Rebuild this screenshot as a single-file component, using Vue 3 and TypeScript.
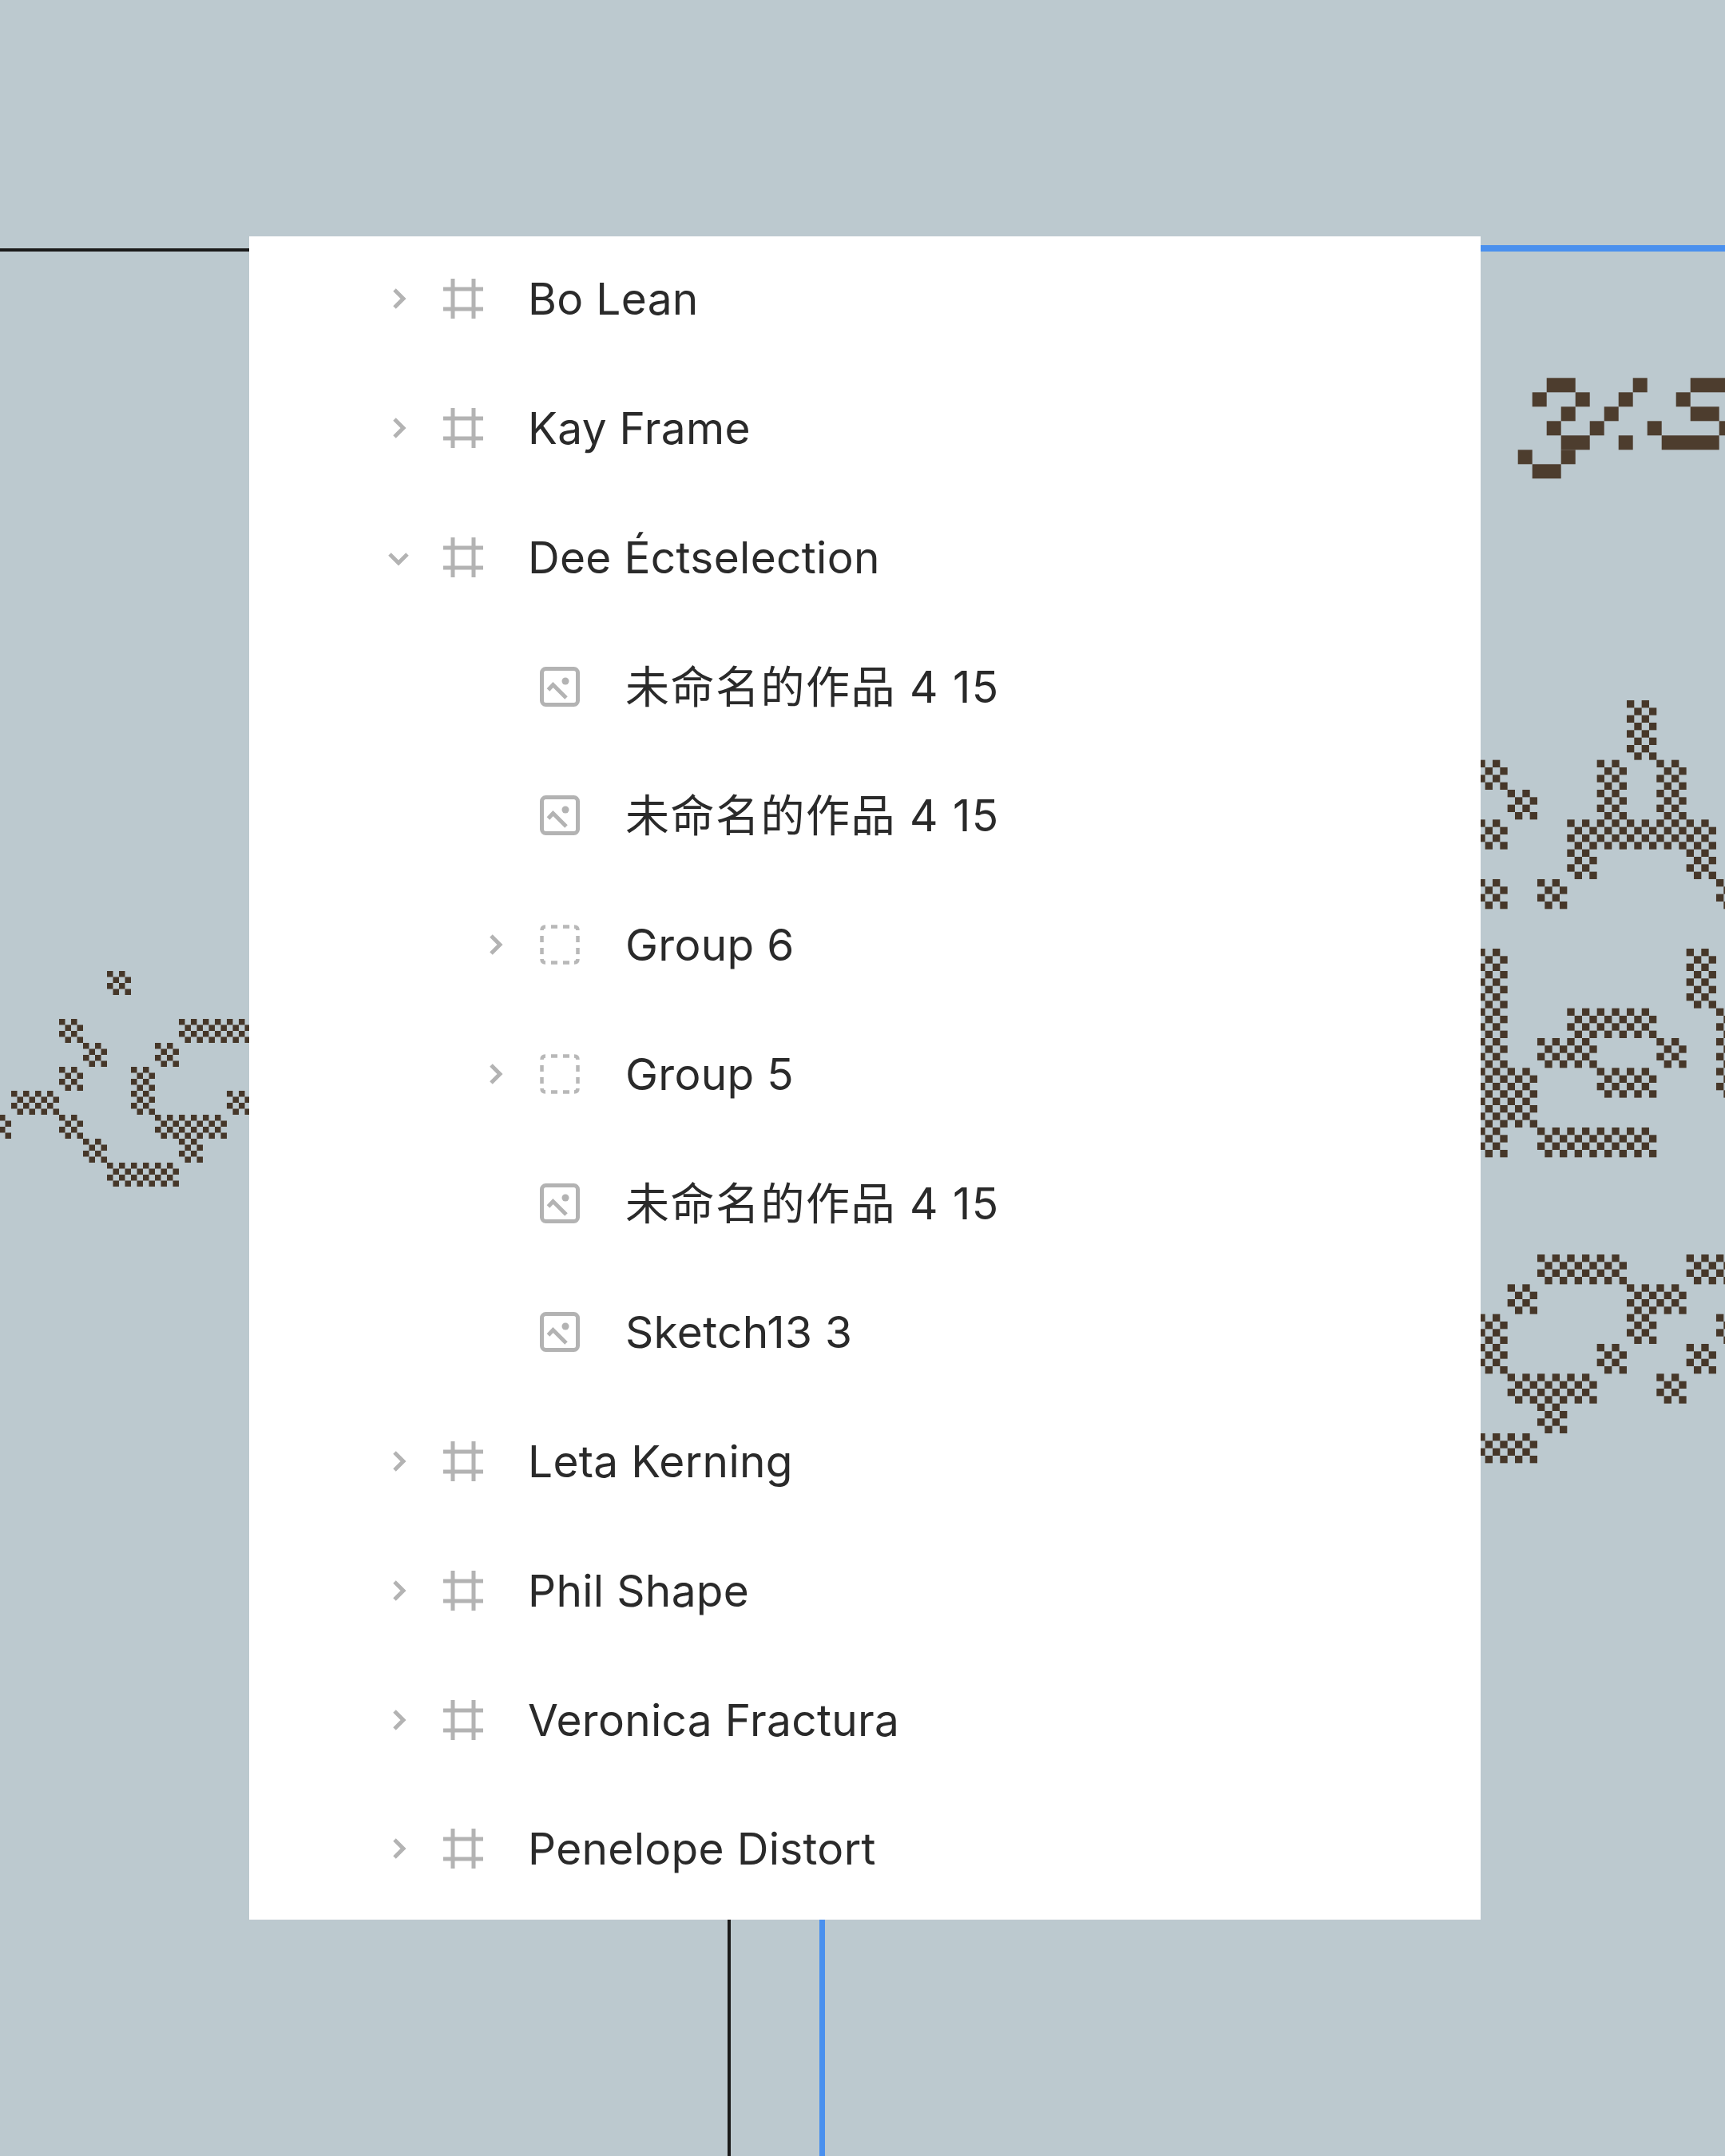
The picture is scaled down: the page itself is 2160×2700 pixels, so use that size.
<script setup lang="ts">
interface LayerRow {
  name: string
  depth: number
  kind: 'frame' | 'image' | 'group'
  arrow: 'right' | 'down' | 'none'
}

interface Dot {
  x: number
  y: number
  size: number
}

const rows: LayerRow[] = [
  { name: 'Bo Lean', depth: 0, kind: 'frame', arrow: 'right' },
  { name: 'Kay Frame', depth: 0, kind: 'frame', arrow: 'right' },
  { name: 'Dee Éctselection', depth: 0, kind: 'frame', arrow: 'down' },
  { name: '未命名的作品 4 15', depth: 1, kind: 'image', arrow: 'none' },
  { name: '未命名的作品 4 15', depth: 1, kind: 'image', arrow: 'none' },
  { name: 'Group 6', depth: 1, kind: 'group', arrow: 'right' },
  { name: 'Group 5', depth: 1, kind: 'group', arrow: 'right' },
  { name: '未命名的作品 4 15', depth: 1, kind: 'image', arrow: 'none' },
  { name: 'Sketch13 3', depth: 1, kind: 'image', arrow: 'none' },
  { name: 'Leta Kerning', depth: 0, kind: 'frame', arrow: 'right' },
  { name: 'Phil Shape', depth: 0, kind: 'frame', arrow: 'right' },
  { name: 'Veronica Fractura', depth: 0, kind: 'frame', arrow: 'right' },
  { name: 'Penelope Distort', depth: 0, kind: 'frame', arrow: 'right' }
]

// bitmaps of the dithered pixel lettering on the canvas
const leftArt = [
  '.....#......',
  '............',
  '...#....####',
  '....#..#....',
  '...#..#.....',
  '.##...#...##',
  '#..#...###..',
  '....#...#...',
  '.....###....'
]

const rightTop = [
  '......#...',
  '......#...',
  '.#...#.#..',
  '..#..#.#..',
  '.#..#####.',
  '....#...#.',
  '.#.#.....#'
]

const rightMid = [
  '.#......#.',
  '.#......#.',
  '.#..###..#',
  '.#.##..#.#',
  '.##..##..#',
  '.##.......',
  '.#.####...'
]

const rightBottom = [
  '...###..##',
  '..#...##..',
  '.#....#..#',
  '.#...#..#.',
  '..###..#..',
  '...#......',
  '.##.......'
]

function ditherBitmap(bitmap: string[], originX: number, originY: number, block: number): Dot[] {
  const dots: Dot[] = []
  const sub = block / 4
  bitmap.forEach((line, r) => {
    line.split('').forEach((cell, c) => {
      if (cell !== '#') return
      for (let i = 0; i < 4; i++) {
        for (let j = 0; j < 2; j++) {
          dots.push({
            x: originX + c * block + (j * 2 + (i % 2)) * sub,
            y: originY + r * block + i * sub,
            size: sub
          })
        }
      }
    })
  })
  return dots
}

const dots: Dot[] = [
  ...ditherBitmap(leftArt, -16, 1216, 30),
  ...ditherBitmap(rightTop, 1813, 877, 37.33),
  ...ditherBitmap(rightMid, 1813, 1188, 37.33),
  ...ditherBitmap(rightBottom, 1813, 1571, 37.33)
]

// solid pixel line top right: [column, row, width]
const solid: number[][] = [
  [2, 0, 2], [8, 0, 1], [12, 0, 4],
  [1, 1, 1], [4, 1, 1], [7, 1, 1], [11, 1, 1],
  [3, 2, 1], [6, 2, 1], [12, 2, 2],
  [2, 3, 1], [5, 3, 1], [9, 3, 1], [14, 3, 1],
  [3, 4, 2], [7, 4, 1], [10, 4, 4],
  [0, 5, 1], [3, 5, 1],
  [1, 6, 2]
]

function isCjk(name: string): boolean {
  return /[\u4e00-\u9fff]/.test(name)
}
</script>

<template>
  <div class="canvas">
    <svg class="art" width="2160" height="2700" viewBox="0 0 2160 2700">
      <rect v-for="(d, i) in dots" :key="i" :x="d.x" :y="d.y" :width="d.size" :height="d.size" fill="#463729" />
      <rect
        v-for="(s, i) in solid"
        :key="'s' + i"
        :x="1900.7 + s[0] * 18"
        :y="473.3 + s[1] * 18"
        :width="s[2] * 18"
        height="18"
        fill="#4d3d2e"
      />
    </svg>
    <div class="line line-black-h"></div>
    <div class="line line-blue-h"></div>
    <div class="line line-black-v"></div>
    <div class="line line-blue-v"></div>

    <div class="panel">
      <div v-for="(row, i) in rows" :key="i" class="row" :class="{ nested: row.depth === 1 }">
        <span class="arrow">
          <svg v-if="row.arrow === 'right'" width="24" height="32" viewBox="0 0 24 32">
            <path d="M7 5 L18 16 L7 27" />
          </svg>
          <svg v-else-if="row.arrow === 'down'" width="32" height="24" viewBox="0 0 32 24">
            <path d="M5 8 L16 19 L27 8" />
          </svg>
        </span>
        <span class="icon">
          <svg v-if="row.kind === 'frame'" width="50" height="50" viewBox="0 0 50 50">
            <path d="M12 0 V50 M38 0 V50 M0 13 H50 M0 38 H50" />
          </svg>
          <svg v-else-if="row.kind === 'image'" width="50" height="50" viewBox="0 0 50 50">
            <rect x="2.5" y="2.5" width="45" height="45" rx="5" />
            <path d="M10.5 29 L16.5 22.5 L33 39" />
            <circle class="sun" cx="32" cy="18" r="4.5" />
          </svg>
          <svg v-else width="50" height="50" viewBox="0 0 50 50">
            <path
              class="dashed"
              d="M14 2.5H22 M29 2.5H37 M14 47.5H22 M29 47.5H37 M2.5 14V22 M2.5 29V37 M47.5 14V22 M47.5 29V37 M2.5 7Q2.5 2.5 7 2.5 M43 2.5Q47.5 2.5 47.5 7 M2.5 43Q2.5 47.5 7 47.5 M43 47.5Q47.5 47.5 47.5 43"
            />
          </svg>
        </span>
        <span class="name" :class="{ cjk: isCjk(row.name) }">{{ row.name }}</span>
      </div>
    </div>
  </div>
</template>

<style>
html,
body {
  margin: 0;
  background: #bcc9cf;
}
</style>

<style scoped>
.canvas {
  position: relative;
  width: 2160px;
  height: 2700px;
  padding-top: 296px;
  box-sizing: border-box;
  background: #bcc9cf;
  overflow: hidden;
}

.art {
  position: absolute;
  left: 0;
  top: 0;
}

.line {
  position: absolute;
}

.line-black-h {
  left: 0;
  top: 311px;
  width: 312px;
  height: 4px;
  background: #1a1a1a;
}

.line-blue-h {
  left: 1854px;
  top: 307px;
  width: 306px;
  height: 8px;
  background: #4a90ee;
}

.line-black-v {
  left: 911px;
  top: 2404px;
  width: 4px;
  height: 296px;
  background: #1a1a1a;
}

.line-blue-v {
  left: 1026px;
  top: 2404px;
  width: 7px;
  height: 296px;
  background: #4a90ee;
}

.panel {
  position: relative;
  width: 1542px;
  height: 2108px;
  margin-left: 312px;
  background: #fff;
  overflow: hidden;
  font-family: Inter, "Noto Sans CJK SC", sans-serif;
  font-size: 55px;
  line-height: 66px;
  color: #2a2a2a;
}

.row {
  display: flex;
  align-items: center;
  height: 161.75px;
  padding-left: 170.5px;
  position: relative;
  top: -2.5px;
}

.row.nested {
  padding-left: 292px;
}

.arrow {
  display: flex;
  align-items: center;
  justify-content: center;
  width: 32px;
  height: 50px;
  margin-right: 40.5px;
}

.row.nested .arrow {
  margin-right: 40px;
}

.icon {
  display: flex;
  width: 50px;
  height: 50px;
  margin-right: 56px;
}

.row.nested .icon {
  margin-right: 57px;
}

.name {
  white-space: nowrap;
  letter-spacing: 0.3px;
}

.name.cjk {
  letter-spacing: 1.5px;
}

.arrow path,
.icon path,
.icon rect {
  fill: none;
  stroke: #b3b3b3;
  stroke-width: 5;
}

.icon .dashed {
  stroke: #b8b8b8;
  stroke-width: 4.5;
}

.icon .sun {
  fill: #b3b3b3;
}
</style>
